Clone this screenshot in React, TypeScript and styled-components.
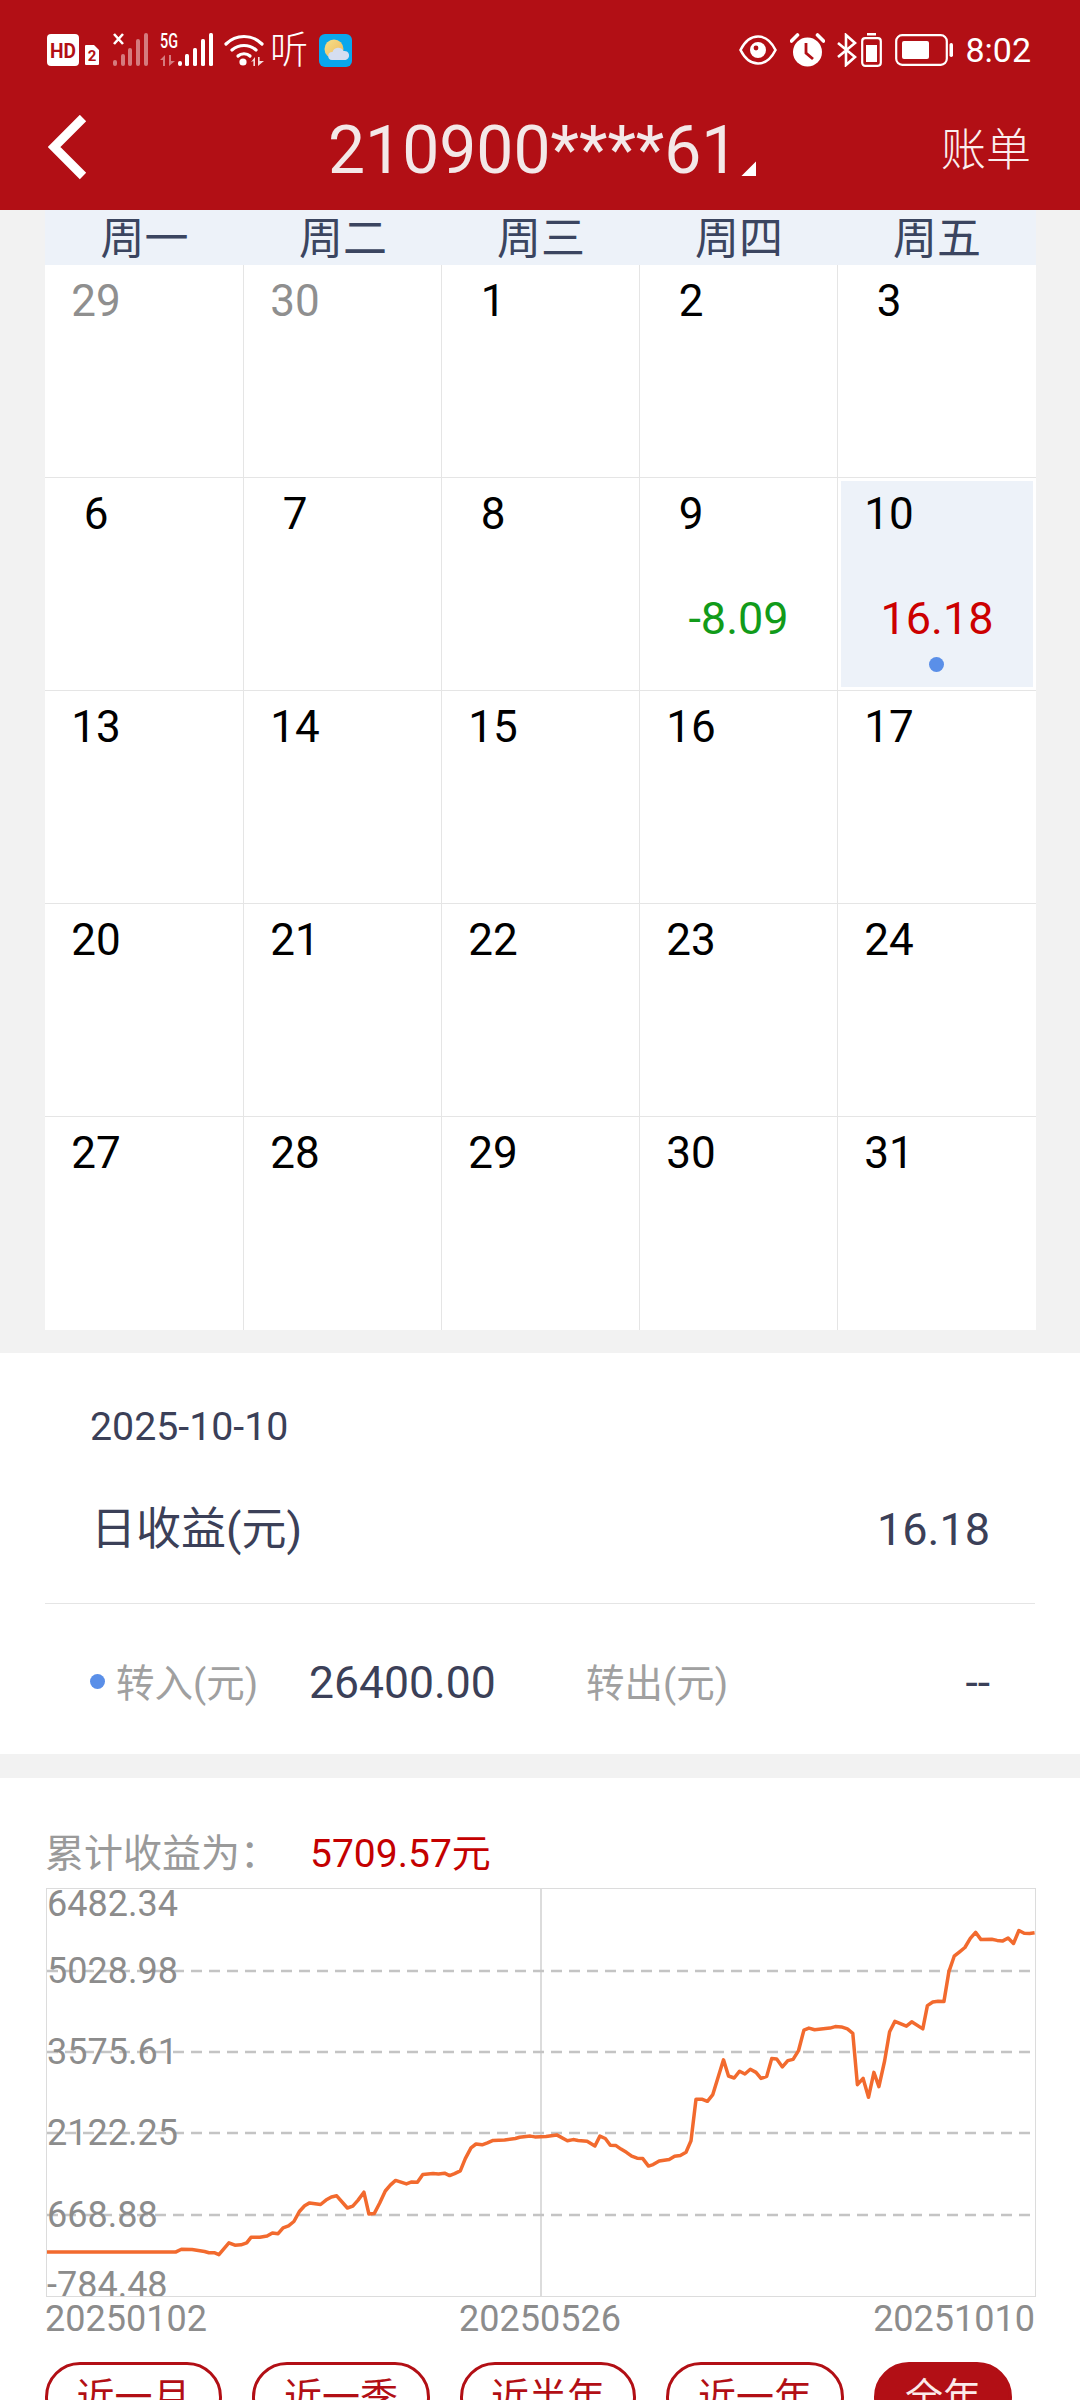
import styled, { createGlobalStyle } from 'styled-components';

const FONT = '"Roboto", "Noto Sans CJK SC", sans-serif';
const RED = '#b20f15';

const GlobalStyle = createGlobalStyle`
  html, body {
    margin: 0;
    padding: 0;
    background: #f2f2f2;
    font-family: ${FONT};
  }
`;

const WEEK = ['周一', '周二', '周三', '周四', '周五'];

type Day = { label: number; muted?: boolean; value?: string; tone?: 'up' | 'down'; active?: boolean };

const DAYS: Day[] = [
  { label: 29, muted: true },
  { label: 30, muted: true },
  { label: 1 },
  { label: 2 },
  { label: 3 },
  { label: 6 },
  { label: 7 },
  { label: 8 },
  { label: 9, value: '-8.09', tone: 'down' },
  { label: 10, value: '16.18', tone: 'up', active: true },
  ...[13, 14, 15, 16, 17, 20, 21, 22, 23, 24, 27, 28, 29, 30, 31].map((label) => ({ label })),
];

const Y_LABELS = [
  { text: '6482.34', y: 15 },
  { text: '5028.98', y: 82 },
  { text: '3575.61', y: 163 },
  { text: '2122.25', y: 244 },
  { text: '668.88', y: 326 },
  { text: '-784.48', y: 396 },
];

const RANGES = [
  { text: '近一月', width: 177 },
  { text: '近一季', width: 178 },
  { text: '近半年', width: 176 },
  { text: '近一年', width: 178 },
  { text: '全年', width: 138, on: true },
];

// traced from the curve, first half then second half
const LEFT_CURVE = [
  [128, 1191], [310, 1191], [490, 1191], [505, 1184], [535, 1185], [570, 1190], [582, 1193], [597, 1193],
  [610, 1198], [638, 1168], [655, 1174], [672, 1173], [688, 1168], [700, 1154], [725, 1154], [745, 1151],
  [760, 1143], [776, 1145], [790, 1130], [805, 1125], [820, 1114], [836, 1088], [850, 1074], [864, 1067],
  [895, 1071], [910, 1060], [925, 1052], [940, 1049], [970, 1080], [985, 1075], [1000, 1060], [1016, 1040],
  [1030, 1095], [1045, 1094], [1060, 1068], [1076, 1037], [1090, 1022], [1105, 1010], [1135, 1019],
  [1150, 1014], [1166, 1015], [1181, 995], [1210, 993], [1225, 994], [1242, 992], [1256, 998], [1270, 993],
  [1286, 986], [1300, 955], [1316, 928], [1330, 918], [1347, 920], [1362, 915], [1378, 909], [1410, 908],
  [1440, 904], [1452, 901], [1482, 898], [1495, 900],
];
const RIGHT_CURVE = [
  [70, 899], [100, 895], [130, 910], [146, 907], [160, 909], [185, 911], [207, 923], [221, 898], [236, 904],
  [250, 921], [266, 922], [280, 931], [295, 939], [310, 949], [325, 954], [341, 955], [357, 974], [370, 970],
  [387, 961], [415, 957], [430, 949], [446, 947], [462, 939], [476, 910], [490, 805], [508, 805], [522, 810],
  [537, 793], [567, 705], [581, 746], [597, 751], [612, 734], [627, 741], [642, 729], [658, 737], [672, 752],
  [688, 747], [702, 702], [716, 703], [732, 723], [747, 707], [762, 704], [777, 682], [792, 630], [806, 625],
  [822, 629], [865, 625], [880, 621], [897, 622], [914, 627], [929, 638], [942, 768], [958, 752], [973, 800],
  [988, 737], [1002, 773], [1018, 708], [1032, 634], [1047, 608], [1079, 620], [1094, 609], [1125, 627],
  [1138, 568], [1153, 559], [1168, 557], [1184, 558], [1198, 482], [1213, 443], [1228, 432], [1243, 421],
  [1258, 398], [1273, 383], [1288, 401], [1318, 400], [1333, 403], [1348, 405], [1364, 397], [1379, 411],
  [1394, 378], [1409, 385], [1424, 386], [1438, 384],
];

const toPoint = (x: number, y: number) => `${x.toFixed(1)},${(1780 + y / 2.529 - 1888).toFixed(1)}`;
const CURVE = [
  ...LEFT_CURVE.map(([x, y]) => toPoint(x / 2.8 - 46, y)),
  ...RIGHT_CURVE.map(([x, y]) => toPoint(520 + x / 2.8 - 46, y)),
].join(' ');

function HdIcon() {
  return (
    <StatusSvg $ml={0} width="32" height="32" viewBox="0 0 32 32">
      <rect width="32" height="32" rx="4" fill="#fff" />
      <IconText x="16" y="24" fontSize="21" fontWeight="700" fill={RED} textLength="26" lengthAdjust="spacingAndGlyphs">
        HD
      </IconText>
    </StatusSvg>
  );
}

function SimIcon() {
  return (
    <StatusSvg $ml={6} width="14" height="20" viewBox="0 0 14 20" $mt={10}>
      <path d="M1 0h8l5 5v14a1 1 0 0 1-1 1H1a1 1 0 0 1-1-1V1a1 1 0 0 1 1-1z" fill="#fff" />
      <IconText x="7" y="16" fontSize="15" fontWeight="700" fill={RED}>
        2
      </IconText>
    </StatusSvg>
  );
}

function NoSignalIcon() {
  return (
    <StatusSvg $ml={14} width="35" height="34" viewBox="0 0 35 34">
      <g fill="#fff" fillOpacity="0.45">
        <rect x="0" y="27" width="4" height="6" rx="2" />
        <rect x="8" y="21" width="4" height="12" rx="2" />
        <rect x="15" y="15" width="4" height="18" rx="2" />
        <rect x="23" y="6" width="4" height="27" rx="2" />
        <rect x="31" y="0" width="4" height="33" rx="2" />
      </g>
      <path d="M1 1l9 10M10 1L1 11" stroke="#fff" strokeWidth="2.6" />
    </StatusSvg>
  );
}

function FiveGIcon() {
  return (
    <StatusSvg $ml={12} width="53" height="34" viewBox="0 0 53 34">
      <IconText x="9" y="15" fontSize="20" fontWeight="500" fill="#fff" textLength="18" lengthAdjust="spacingAndGlyphs">
        5G
      </IconText>
      <path d="M0 27l5-5v11h-2v-6zM9 22h2v6l4 0-6 5z" fill="#fff" fillOpacity="0.45" />
      <g fill="#fff">
        <rect x="18" y="28" width="4" height="5" rx="2" />
        <rect x="25" y="21" width="4" height="12" rx="1.5" />
        <rect x="33" y="15" width="4" height="18" rx="1.5" />
        <rect x="41" y="6" width="4" height="27" rx="1.5" />
        <rect x="49" y="0" width="4" height="33" rx="1.5" />
      </g>
    </StatusSvg>
  );
}

function WifiIcon() {
  return (
    <StatusSvg $ml={11} width="40" height="34" viewBox="0 0 40 34">
      <g fill="none" stroke="#fff" strokeWidth="3.2" strokeLinecap="round">
        <path d="M2 11c10-10 26-10 36 0" />
        <path d="M8 17c7-6 17-6 24 0" />
        <path d="M14 23c3-3 9-3 12 0" />
      </g>
      <circle cx="19" cy="29" r="3.6" fill="#fff" />
      <path d="M27 29l4-5v9h-1.6v-5zM34 24h1.6v4H40l-6 5z" fill="#fff" fillOpacity="0.85" />
    </StatusSvg>
  );
}

function WeatherIcon() {
  return (
    <StatusSvg $ml={11} width="33" height="33" viewBox="0 0 33 33">
      <defs>
        <linearGradient id="sun" x1="0" y1="0" x2="1" y2="1">
          <stop offset="0" stopColor="#f5e08a" />
          <stop offset="1" stopColor="#eeb95e" />
        </linearGradient>
      </defs>
      <rect width="33" height="33" rx="6" fill="#0aa7ec" />
      <circle cx="15" cy="15" r="9.5" fill="url(#sun)" />
      <path d="M13 26a4 4 0 0 1 .5-8 6 6 0 0 1 11-1 4.600 4.600 0 0 1 2 9z" fill="#d5def0" />
    </StatusSvg>
  );
}

function EyeIcon() {
  return (
    <StatusSvg $ml={0} width="38" height="32" viewBox="0 0 38 32">
      <path d="M1.5 16C6 7 12 2.5 19 2.5S32 7 36.5 16C32 25 26 29.5 19 29.5S6 25 1.5 16z" fill="none" stroke="#fff" strokeWidth="2.6" />
      <circle cx="19" cy="16" r="8" fill="#fff" />
      <circle cx="17" cy="14" r="2.4" fill={RED} />
    </StatusSvg>
  );
}

function AlarmIcon() {
  return (
    <StatusSvg $ml={13} width="35" height="34" viewBox="0 0 35 34">
      <circle cx="17.5" cy="19" r="14.5" fill="#fff" />
      <path d="M16 10v10l7 6" fill="none" stroke={RED} strokeWidth="2.8" />
      <path d="M1.500 8l6-6M33.500 8l-6-6" stroke="#fff" strokeWidth="3.6" strokeLinecap="round" />
    </StatusSvg>
  );
}

function BluetoothIcon() {
  return (
    <StatusSvg $ml={12} width="20" height="34" viewBox="0 0 20 34">
      <path d="M1 10l17 14-9 8V2l9 8L1 24" fill="none" stroke="#fff" strokeWidth="2.6" />
    </StatusSvg>
  );
}

function SmallBatteryIcon() {
  return (
    <StatusSvg $ml={4} width="21" height="34" viewBox="0 0 21 34">
      <rect x="6" y="0" width="9" height="2.5" fill="#fff" />
      <rect x="1.2" y="5.2" width="18.6" height="27.6" rx="3" fill="none" stroke="#fff" strokeWidth="2.2" />
      <rect x="5" y="12" width="11" height="17" fill="#fff" />
    </StatusSvg>
  );
}

function BatteryIcon() {
  return (
    <StatusSvg $ml={13} width="60" height="32" viewBox="0 0 60 32">
      <rect x="1.2" y="1.2" width="50.6" height="29.6" rx="6" fill="none" stroke="#fff" strokeWidth="2.2" />
      <rect x="7" y="7" width="27" height="18" rx="2" fill="#fff" />
      <rect x="54.5" y="9" width="3.5" height="14" rx="1.7" fill="#fff" />
    </StatusSvg>
  );
}

export default function App() {
  return (
    <Page>
      <GlobalStyle />
      <Header>
        <StatusBar>
          <StatusGroup>
            <HdIcon />
            <SimIcon />
            <NoSignalIcon />
            <FiveGIcon />
            <WifiIcon />
            <ListenMark>听</ListenMark>
            <WeatherIcon />
          </StatusGroup>
          <StatusGroup>
            <EyeIcon />
            <AlarmIcon />
            <BluetoothIcon />
            <SmallBatteryIcon />
            <BatteryIcon />
            <Clock>8:02</Clock>
          </StatusGroup>
        </StatusBar>
        <NavBar>
          <BackIcon width="40" height="66" viewBox="0 0 40 66">
            <path d="M35 3L6 32l29 29" fill="none" stroke="#fff" strokeWidth="9" />
          </BackIcon>
          <Title>
            210900****61
            <Corner />
          </Title>
          <NavLink>账单</NavLink>
        </NavBar>
      </Header>

      <CalendarSection>
        <WeekRow>
          {WEEK.map((name) => (
            <WeekName key={name}>{name}</WeekName>
          ))}
        </WeekRow>
        <DayGrid>
          {DAYS.map((day, i) => (
            <DayCell key={i}>
              <DayInner $active={day.active}>
                <DayLabel $muted={day.muted}>{day.label}</DayLabel>
                {day.value && <DayValue $tone={day.tone}>{day.value}</DayValue>}
                {day.active && <ValueDot />}
              </DayInner>
            </DayCell>
          ))}
        </DayGrid>
      </CalendarSection>

      <DetailPanel>
        <DetailDate>2025-10-10</DetailDate>
        <IncomeRow>
          <span>日收益(元)</span>
          <span>16.18</span>
        </IncomeRow>
        <TransferRow>
          <TransferIn>
            <BlueDot />
            <TransferLabel>转入(元)</TransferLabel>
          </TransferIn>
          <TransferValue>26400.00</TransferValue>
          <TransferLabel $gap={60}>转出(元)</TransferLabel>
          <TransferEnd>--</TransferEnd>
        </TransferRow>
      </DetailPanel>

      <ChartPanel>
        <TotalRow>
          <TotalLabel>累计收益为：</TotalLabel>
          <TotalValue>5709.57元</TotalValue>
        </TotalRow>
        <ChartFrame>
          <ChartSvg width="988" height="407" viewBox="0 0 988 407">
            <line x1="494" y1="0" x2="494" y2="407" stroke="#dcdcdc" strokeWidth="2" />
            {[82, 163, 244, 326].map((y) => (
              <line key={y} x1="0" y1={y} x2="984" y2={y} stroke="#c4c4c4" strokeWidth="2.5" strokeDasharray="11 7" />
            ))}
            <polyline points={CURVE} fill="none" stroke="#f26a2e" strokeWidth="3.5" strokeLinejoin="round" />
          </ChartSvg>
          {Y_LABELS.map((label) => (
            <AxisValue key={label.text} $y={label.y}>
              {label.text}
            </AxisValue>
          ))}
        </ChartFrame>
        <DateAxis>
          <span>20250102</span>
          <span>20250526</span>
          <span>20251010</span>
        </DateAxis>
        <RangeRow>
          {RANGES.map((range) => (
            <RangeButton key={range.text} $width={range.width} $on={range.on}>
              {range.text}
            </RangeButton>
          ))}
        </RangeRow>
      </ChartPanel>
    </Page>
  );
}

const Page = styled.div`
  width: 1080px;
  height: 2400px;
  overflow: hidden;
  background: #f2f2f2;
`;

const Header = styled.header`
  height: 210px;
  background: ${RED};
`;

const StatusBar = styled.div`
  height: 100px;
  padding: 0 49px 0 47px;
  display: flex;
  align-items: center;
  justify-content: space-between;
`;

const StatusGroup = styled.div`
  display: flex;
  align-items: center;
`;

const StatusSvg = styled.svg<{ $ml: number; $mt?: number }>`
  display: block;
  flex: none;
  margin-left: ${(p) => p.$ml}px;
  margin-top: ${(p) => p.$mt ?? 0}px;
`;

const IconText = styled.text`
  font-family: "Roboto", sans-serif;
  text-anchor: middle;
`;

const ListenMark = styled.span`
  width: 38px;
  margin-left: 6px;
  font-size: 38px;
  font-weight: 300;
  line-height: 34px;
  color: #fff;
`;

const Clock = styled.span`
  margin-left: 10px;
  font-size: 34px;
  line-height: 34px;
  color: #fff;
`;

const NavBar = styled.nav`
  height: 110px;
  padding: 0 49px 14px 48px;
  box-sizing: border-box;
  display: flex;
  align-items: center;
`;

const BackIcon = styled.svg`
  display: block;
  flex: none;
`;

const Title = styled.div`
  position: relative;
  margin-top: 6px;
  margin-left: 240px;
  font-size: 66px;
  line-height: 80px;
  color: #f3e8e8;
`;

const Corner = styled.i`
  position: absolute;
  left: 100%;
  bottom: 15px;
  margin-left: 3px;
  width: 15px;
  height: 15px;
  background: #fff;
  clip-path: polygon(100% 0, 100% 100%, 0 100%);
`;

const NavLink = styled.div`
  margin-top: 6px;
  margin-left: auto;
  font-size: 45px;
  font-weight: 300;
  line-height: 60px;
  color: #fbeeee;
`;

const CalendarSection = styled.section`
  padding: 0 44px 0 45px;
`;

const WeekRow = styled.div`
  height: 55px;
  display: grid;
  grid-template-columns: 199px 198px 198px 198px 198px;
  background: #edf2f9;
`;

const WeekName = styled.div`
  font-size: 44px;
  line-height: 59px;
  text-align: center;
  color: #3b4560;
`;

const DayGrid = styled.div`
  display: grid;
  grid-template-columns: 199px 198px 198px 198px 198px;
  grid-auto-rows: 213px;
  background: #fff;
`;

const DayCell = styled.div`
  box-sizing: border-box;
  padding: 3px;
  border-bottom: 1px solid #e5e5e5;
  border-right: 1px solid #e5e5e5;

  &:nth-child(5n) {
    border-right: none;
  }

  &:nth-last-child(-n + 5) {
    border-bottom: none;
  }
`;

const DayInner = styled.div<{ $active?: boolean }>`
  position: relative;
  height: 100%;
  display: flex;
  flex-direction: column;
  background: ${(p) => (p.$active ? '#edf2f9' : 'transparent')};
`;

const DayLabel = styled.div<{ $muted?: boolean }>`
  width: 96px;
  margin-top: 7px;
  font-size: 44px;
  line-height: 52px;
  text-align: center;
  color: ${(p) => (p.$muted ? '#8f8f8f' : '#000')};
`;

const DayValue = styled.div<{ $tone?: 'up' | 'down' }>`
  margin-top: 53px;
  font-size: 45px;
  line-height: 52px;
  text-align: center;
  color: ${(p) => (p.$tone === 'up' ? '#cc0000' : '#119b1a')};
`;

const ValueDot = styled.i`
  position: absolute;
  left: 88px;
  bottom: 15px;
  width: 15px;
  height: 15px;
  border-radius: 50%;
  background: #5a8fe8;
`;

const DetailPanel = styled.section`
  margin-top: 23px;
  height: 401px;
  box-sizing: border-box;
  padding-top: 50px;
  background: #fff;
`;

const DetailDate = styled.div`
  padding-left: 90px;
  font-size: 39.3px;
  line-height: 48px;
  color: #3b4058;
`;

const IncomeRow = styled.div`
  margin: 49px 90px 0 91px;
  display: flex;
  justify-content: space-between;
  font-size: 45px;
  line-height: 60px;
  color: #3b4058;
`;

const TransferRow = styled.div`
  margin: 43px 45px 0;
  padding: 49px 45px 0;
  border-top: 1px solid #e5e5e5;
  display: flex;
  align-items: center;
  height: 60px;
`;

const TransferIn = styled.div`
  display: flex;
  align-items: center;
  width: 219px;
`;

const BlueDot = styled.i`
  width: 15px;
  height: 15px;
  margin: 0 11px 3px 0;
  border-radius: 50%;
  background: #5a8fe8;
`;

const TransferLabel = styled.span<{ $gap?: number }>`
  margin-left: ${(p) => p.$gap ?? 0}px;
  margin-bottom: 6px;
  font-size: 38.5px;
  color: #a0a0a0;
`;

const TransferValue = styled.span`
  width: 217px;
  font-size: 44.5px;
  color: #3b4058;
`;

const TransferEnd = styled.span`
  margin-left: auto;
  font-size: 44.5px;
  color: #3b4058;
`;

const ChartPanel = styled.section`
  margin-top: 24px;
  height: 622px;
  box-sizing: border-box;
  padding: 52px 46px 0;
  background: #fff;
`;

const TotalRow = styled.div`
  display: flex;
  height: 48px;
  line-height: 48px;
  font-size: 39px;
`;

const TotalLabel = styled.span`
  width: 265px;
  margin-left: -1px;
  color: #9a9a9a;
`;

const TotalValue = styled.span`
  color: #c40000;
`;

const ChartFrame = styled.div`
  position: relative;
  margin-top: 10px;
  width: 988px;
  height: 407px;
  border: 1px solid #dcdcdc;
  overflow: hidden;
`;

const ChartSvg = styled.svg`
  display: block;
`;

const AxisValue = styled.span<{ $y: number }>`
  position: absolute;
  left: 0;
  top: ${(p) => p.$y}px;
  transform: translateY(-50%);
  font-size: 36px;
  line-height: 40px;
  color: #8c8c8c;
`;

const DateAxis = styled.div`
  margin: 1px 0 0 -1px;
  display: flex;
  justify-content: space-between;
  width: 990px;
  font-size: 36px;
  line-height: 42px;
  color: #8c8c8c;
`;

const RangeRow = styled.div`
  margin: 22px 0 0 -1px;
  display: flex;
  gap: 30px;
`;

const RangeButton = styled.div<{ $width: number; $on?: boolean }>`
  box-sizing: border-box;
  flex: none;
  width: ${(p) => p.$width}px;
  height: 70px;
  border: 3px solid ${RED};
  border-radius: 35px;
  font-size: 38px;
  line-height: 64px;
  text-align: center;
  background: ${(p) => (p.$on ? RED : '#fff')};
  color: ${(p) => (p.$on ? '#fbeaea' : RED)};
`;
